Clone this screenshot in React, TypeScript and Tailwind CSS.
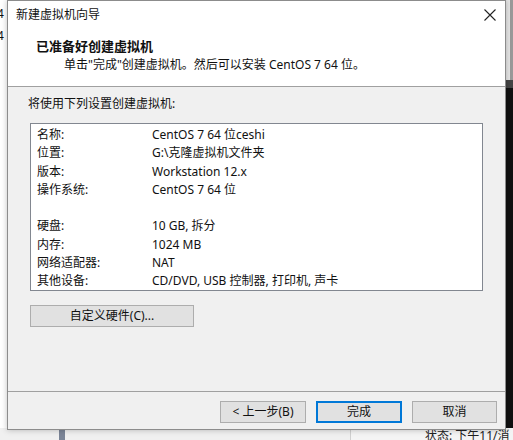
import React from 'react';

const font = { fontFamily: '"Noto Sans", "Noto Sans CJK SC", sans-serif' };

const settings = [
  { label: '名称:', value: 'CentOS 7 64 位ceshi' },
  { label: '位置:', value: 'G:\\克隆虚拟机文件夹' },
  { label: '版本:', value: 'Workstation 12.x' },
  { label: '操作系统:', value: 'CentOS 7 64 位' },
  { label: '', value: '' },
  { label: '硬盘:', value: '10 GB, 拆分' },
  { label: '内存:', value: '1024 MB' },
  { label: '网络适配器:', value: 'NAT' },
  { label: '其他设备:', value: 'CD/DVD, USB 控制器, 打印机, 声卡' },
];

function WinButton({ children, primary, className = '' }: { children: React.ReactNode; primary?: boolean; className?: string }) {
  return (
    <div
      className={`h-[22px] flex items-center justify-center text-[12px] text-[#111] bg-[#e1e1e1] ${
        primary ? 'border-2 border-[#0078d7]' : 'border border-[#adadad]'
      } ${className}`}
    >
      {children}
    </div>
  );
}

export default function App() {
  return (
    <div className="relative w-[513px] h-[440px] overflow-hidden bg-white text-[#111]" style={font}>
      {/* desktop behind the dialog */}
      <div className="absolute left-0 top-0 w-[7px] h-[440px] bg-white text-[12px] leading-none">
        <div className="absolute left-[-3px] top-[8px]">4</div>
        <div className="absolute left-[-3px] top-[30px]">4</div>
      </div>
      <div className="absolute left-[505px] top-0 w-[8px] h-[440px] bg-[#111]">
        <div className="h-[80px] bg-[#e6e6e6] border-r-[3px] border-[#9a9a9a]" />
        <div className="h-[8px] bg-[#444]" />
      </div>
      <div className="absolute left-0 top-[428px] w-[513px] h-[12px] bg-[#f0f0f0]">
        <div className="absolute left-[59px] top-0 w-[6px] h-[12px] bg-[#7b8597]" />
        <div className="absolute left-[350px] top-0 w-[163px] h-[12px] bg-[#f4f4f4] border-l border-[#d0d0d0]" />
        <div className="absolute left-[425px] top-[1px] text-[12px] leading-[14px] text-[#222] whitespace-nowrap">
          状态: 下午11/消
        </div>
      </div>

      {/* dialog window */}
      <div className="absolute left-[7px] top-0 w-[499px] h-[430px] flex flex-col border border-[#8c8c8c] bg-[#f0f0f0] shadow-[0_0_6px_rgba(0,0,0,0.25)]">
        <div className="h-[28px] shrink-0 bg-white flex items-center justify-between pl-[8px] pr-[7px]">
          <span className="text-[12px]">新建虚拟机向导</span>
          <svg width="14" height="14" viewBox="0 0 14 14" className="mr-[1px]">
            <path d="M1.5 1.5 L12.5 12.5 M12.5 1.5 L1.5 12.5" stroke="#222" strokeWidth="1.1" />
          </svg>
        </div>

        <div className="h-[58px] shrink-0 bg-white border-b border-[#a0a0a0] flex flex-col pl-[28px] pt-[8px]">
          <div className="text-[13px] font-bold leading-[18px]">已准备好创建虚拟机</div>
          <div className="text-[12px] leading-[16px] pl-[28px] mt-[2px]">
            单击"完成"创建虚拟机。然后可以安装 CentOS 7 64 位。
          </div>
        </div>

        <div className="flex-1 flex flex-col px-[22px]">
          <div className="text-[12px] leading-[16px] mt-[9px] -ml-[2px]">将使用下列设置创建虚拟机:</div>

          <div className="mt-[11px] h-[168px] bg-white border border-[#828790] pt-[2px] pl-[6px]">
            {settings.map((row, i) => (
              <div key={i} className="flex text-[12px] leading-[18.3px] h-[18.3px] whitespace-nowrap">
                <span className="w-[115px]">{row.label}</span>
                <span>{row.value}</span>
              </div>
            ))}
          </div>

          <WinButton className="w-[164px] mt-[14px] bg-[#e1e1e1]">自定义硬件(C)...</WinButton>
        </div>

        <div className="h-[38px] shrink-0 border-t border-[#a0a0a0] flex items-start justify-end gap-[10px] pt-[9px] pr-[8px]">
          <WinButton className="w-[86px]">&lt; 上一步(B)</WinButton>
          <WinButton primary className="w-[86px]">完成</WinButton>
          <WinButton className="w-[85px]">取消</WinButton>
        </div>
      </div>
    </div>
  );
}
